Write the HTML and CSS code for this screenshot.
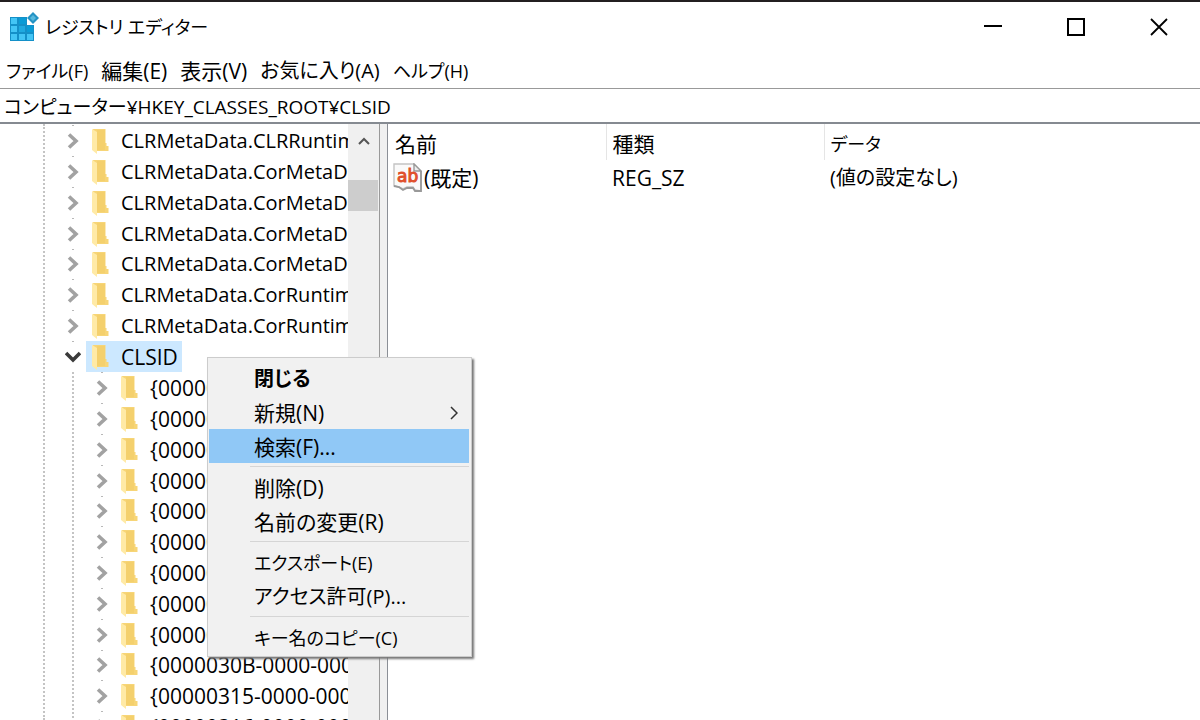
FILE: index.html
```html
<!DOCTYPE html>
<html lang="ja">
<head>
<meta charset="utf-8">
<title>レジストリ エディター</title>
<link rel="stylesheet" href="styles.css">
</head>
<body>
<svg class="defs" aria-hidden="true">
  <linearGradient id="sheet"><stop offset="0" stop-color="#f3cd68"/><stop offset="1" stop-color="#f9da82"/></linearGradient>
  <symbol id="folder" viewBox="0 0 18 26"><path d="M1 1h12.500v14l1 0v3l2 0v5H5z" fill="#f7d577"/><path d="M5 2h8v20H5z" fill="#f4d06d"/><path d="M0 1l5 3v22l-5-4z" fill="#ffeaa6"/></symbol>
  <symbol id="closed" viewBox="0 0 12 16"><path d="M2 1.500l7 6.500-7 6.500" fill="none" stroke="#a2a2a2" stroke-width="3.600"/></symbol>
  <symbol id="open" viewBox="0 0 16 12"><path d="M1 2l7 7 7-7" fill="none" stroke="#3a3a3a" stroke-width="3.600"/></symbol>
</svg>
<div class="window">
  <header class="titlebar">
    <svg class="app-icon" viewBox="0 0 29 30" aria-hidden="true">
      <path d="M0 5h17v8h7v16H0z" fill="#1490c8"/>
      <path d="M1 6h6v6H1zM1 14h6v6H1zM9 14h6v6H9zM1 22h6v6H1zM9 22h6v6H9zM17 22h6v6h-6z" fill="#43c5f5"/>
      <path d="M9 6h7v6H9zM17 14h6v6h-6z" fill="#0a9bd6"/><path d="M9 14h6v6H9z" fill="#1fa9e0"/>
      <path d="M23 0l6 6-6 6-6-6z" fill="#2593c4"/><path d="M23 3l3 3-3 3-3-3z" fill="#58b9dd"/>
    </svg>
    <h1 class="title">レジストリ エディター</h1>
    <div class="controls">
      <button class="control" aria-label="最小化"><svg viewBox="0 0 20 20"><path d="M1 9h18" stroke="#000" stroke-width="2"/></svg></button>
      <button class="control" aria-label="最大化"><svg viewBox="0 0 20 20"><path d="M2 2h16v16H2z" fill="none" stroke="#000" stroke-width="2"/></svg></button>
      <button class="control" aria-label="閉じる"><svg viewBox="0 0 20 20"><path d="M2 2l16 16M18 2L2 18" stroke="#000" stroke-width="1.800"/></svg></button>
    </div>
  </header>
  <nav class="menubar">
    <button class="kana">ファイル(F)</button><button>編集(E)</button><button>表示(V)</button><button class="mixed">お気に入り(A)</button><button class="kana">ヘルプ(H)</button>
  </nav>
  <input class="address" aria-label="アドレス" value="コンピューター¥HKEY_CLASSES_ROOT¥CLSID">
  <main class="panes">
    <section class="tree-pane">
      <ul class="tree">
        <li class="node"><svg class="arrow"><use href="#closed"/></svg><svg class="folder"><use href="#folder"/></svg><span>CLRMetaData.CLRRuntimeHost</span></li>
        <li class="node"><svg class="arrow"><use href="#closed"/></svg><svg class="folder"><use href="#folder"/></svg><span>CLRMetaData.CorMetaDataDispenser</span></li>
        <li class="node"><svg class="arrow"><use href="#closed"/></svg><svg class="folder"><use href="#folder"/></svg><span>CLRMetaData.CorMetaDataDispenser.2</span></li>
        <li class="node"><svg class="arrow"><use href="#closed"/></svg><svg class="folder"><use href="#folder"/></svg><span>CLRMetaData.CorMetaDataDispenserRuntime</span></li>
        <li class="node"><svg class="arrow"><use href="#closed"/></svg><svg class="folder"><use href="#folder"/></svg><span>CLRMetaData.CorMetaDataDispenserRuntime.2</span></li>
        <li class="node"><svg class="arrow"><use href="#closed"/></svg><svg class="folder"><use href="#folder"/></svg><span>CLRMetaData.CorRuntimeHost</span></li>
        <li class="node"><svg class="arrow"><use href="#closed"/></svg><svg class="folder"><use href="#folder"/></svg><span>CLRMetaData.CorRuntimeHost.2</span></li>
        <li class="node expanded"><svg class="arrow"><use href="#open"/></svg><div class="selected"><svg class="folder"><use href="#folder"/></svg><span>CLSID</span></div></li>
        <li>
          <ul class="children">
            <li class="node"><svg class="arrow"><use href="#closed"/></svg><svg class="folder"><use href="#folder"/></svg><span>{0000002F-0000-0000-C000-000000000046}</span></li>
            <li class="node"><svg class="arrow"><use href="#closed"/></svg><svg class="folder"><use href="#folder"/></svg><span>{00000300-0000-0000-C000-000000000046}</span></li>
            <li class="node"><svg class="arrow"><use href="#closed"/></svg><svg class="folder"><use href="#folder"/></svg><span>{00000301-A8F2-4877-BA0A-FD2B6645FB94}</span></li>
            <li class="node"><svg class="arrow"><use href="#closed"/></svg><svg class="folder"><use href="#folder"/></svg><span>{00000303-0000-0000-C000-000000000046}</span></li>
            <li class="node"><svg class="arrow"><use href="#closed"/></svg><svg class="folder"><use href="#folder"/></svg><span>{00000304-0000-0000-C000-000000000046}</span></li>
            <li class="node"><svg class="arrow"><use href="#closed"/></svg><svg class="folder"><use href="#folder"/></svg><span>{00000305-0000-0000-C000-000000000046}</span></li>
            <li class="node"><svg class="arrow"><use href="#closed"/></svg><svg class="folder"><use href="#folder"/></svg><span>{00000306-0000-0000-C000-000000000046}</span></li>
            <li class="node"><svg class="arrow"><use href="#closed"/></svg><svg class="folder"><use href="#folder"/></svg><span>{00000308-0000-0000-C000-000000000046}</span></li>
            <li class="node"><svg class="arrow"><use href="#closed"/></svg><svg class="folder"><use href="#folder"/></svg><span>{00000309-0000-0000-C000-000000000046}</span></li>
            <li class="node"><svg class="arrow"><use href="#closed"/></svg><svg class="folder"><use href="#folder"/></svg><span>{0000030B-0000-0000-C000-000000000046}</span></li>
            <li class="node"><svg class="arrow"><use href="#closed"/></svg><svg class="folder"><use href="#folder"/></svg><span>{00000315-0000-0000-C000-000000000046}</span></li>
            <li class="node"><svg class="arrow"><use href="#closed"/></svg><svg class="folder"><use href="#folder"/></svg><span>{00000316-0000-0000-C000-000000000046}</span></li>
          </ul>
        </li>
      </ul>
      <div class="scrollbar">
        <button class="scroll-up" aria-label="上へスクロール"><svg viewBox="0 0 12 8"><path d="M1 7l5-5 5 5" fill="none" stroke="#555" stroke-width="2"/></svg></button>
        <div class="thumb"></div>
      </div>
    </section>
    <div class="splitter"></div>
    <section class="values-pane">
      <table class="values">
        <colgroup><col class="col-name"><col class="col-type"><col></colgroup>
        <thead><tr><th>名前</th><th>種類</th><th class="kana">データ</th></tr></thead>
        <tbody><tr>
          <td class="name"><div class="value-name"><svg class="value-icon" viewBox="0 0 29 30" aria-hidden="true">
            <path d="M1 1h20l7 7v20l-6-1-2-3-6 0-4 2-4-2-5-1z" fill="#fafafa" stroke="#c4c4c4" stroke-width="1.400"/>
            <path d="M21 1v7h7z" fill="#eee" stroke="#999" stroke-width="1.400"/>
            <path d="M1 23l5 1 4 3 4-2 6 0 2 3 6 0V8" fill="none" stroke="#999" stroke-width="1.800"/>
            <text class="value-glyph" x="4" y="19">ab</text></svg><span>(既定)</span></div></td>
          <td>REG_SZ</td><td class="mixed">(値の設定なし)</td>
        </tr></tbody>
      </table>
    </section>
  </main>
  <div class="context-menu" role="menu">
    <button class="item default" role="menuitem">閉じる</button>
    <button class="item" role="menuitem">新規(N)<svg class="submenu" viewBox="0 0 8 14"><path d="M1 1l6 6-6 6" fill="none" stroke="#333" stroke-width="1.500"/></svg></button>
    <button class="item active" role="menuitem">検索(F)...</button>
    <hr>
    <button class="item" role="menuitem">削除(D)</button>
    <button class="item" role="menuitem">名前の変更(R)</button>
    <hr>
    <button class="item kana" role="menuitem">エクスポート(E)</button>
    <button class="item mixed" role="menuitem">アクセス許可(P)...</button>
    <hr>
    <button class="item kana" role="menuitem">キー名のコピー(C)</button>
  </div>
</div>
</body>
</html>
```
FILE: styles.css
```css
* { box-sizing: border-box; }
body { margin: 0; background: #fff; color: #000; }
body, button, input { font-family: "Open Sans", "Noto Sans CJK JP", sans-serif; font-size: 21px; line-height: 30px; font-feature-settings: "palt"; }
button { padding: 0; border: 0; background: none; color: inherit; }
ul { margin: 0; padding: 0; list-style: none; }
.mixed { font-size: 20px; }
.kana { font-size: 18px; }
.defs { position: absolute; width: 0; height: 0; }
.window { position: relative; display: flex; flex-direction: column; height: 100vh; overflow: hidden; border-top: 2px solid #231f20; }

.titlebar { display: flex; align-items: center; height: 50px; padding-left: 10px; }
.app-icon { width: 29px; height: 30px; }
.title { flex: 1; margin: 0 0 0 6px; font-size: 18px; font-weight: 400; }
.controls { display: flex; }
.control { display: flex; align-items: center; justify-content: center; width: 83px; height: 48px; }
.control svg { width: 20px; height: 20px; }

.menubar { display: flex; align-items: center; gap: 13px; height: 36px; padding: 2px 0 0 6px; }
.address { width: 100%; height: 36px; padding: 0 4px; border: 0; border-top: 1px solid #999; border-bottom: 2px solid #858a91; outline: 0; color: #000; background: #fff; font-size: 19px; }

.panes { display: flex; flex: 1; min-height: 0; }
.tree-pane { display: flex; width: 380px; border-right: 1px solid #999; overflow: hidden; }
.tree { flex: 1; min-width: 0; overflow: hidden; padding-top: 1px; margin-left: 43px; border-left: 2px dotted #c4c4c4; }
.node { display: flex; align-items: center; height: 31px; padding-left: 22px; white-space: nowrap; font-size: 20px; background: linear-gradient(#b8b8b8, #b8b8b8) 27px 0 / 2px 1px no-repeat; }
.node:nth-child(5n) { height: 30px; }
.arrow { flex: none; width: 12px; height: 16px; margin-right: 11px; }
.folder { flex: none; width: 18px; height: 26px; margin: 0 11px 0 2px; }
.expanded { padding-left: 20px; font-size: 21px; }
.expanded .arrow { width: 16px; height: 12px; margin-right: 5px; }
.selected { display: flex; align-items: center; height: 31px; padding: 0 4px; background: #cce8ff; }
.children { margin-left: 27px; border-left: 2px dotted #c4c4c4; }
.children .node { font-size: 21px; }
.scrollbar { display: flex; flex-direction: column; width: 31px; background: #f0f0f0; }
.scroll-up { display: flex; align-items: center; justify-content: center; height: 34px; margin-bottom: 22px; }
.scroll-up svg { width: 12px; height: 8px; }
.thumb { height: 31px; margin-right: 1px; background: #cdcdcd; }
.splitter { width: 8px; background: #f0f0f0; border-right: 1px solid #8b8f96; }

.values-pane { flex: 1; min-width: 0; }
.values { width: 100%; border-collapse: collapse; table-layout: fixed; }
.col-name { width: 218px; }
.col-type { width: 218px; }
th, td { padding: 0 0 0 6px; text-align: left; font-weight: 400; }
th { height: 36px; padding-top: 3px; border-right: 1px solid #e5e5e5; }
th:first-child { padding-left: 7px; }
th:last-child { border-right: 0; }
td { height: 36px; }
.name { padding-left: 5px; }
.value-name { display: flex; align-items: center; gap: 2px; }
.value-icon { width: 29px; height: 30px; }
.value-glyph { fill: #e0502c; stroke: #e0502c; stroke-width: 1px; font-family: "DejaVu Sans", sans-serif; font-size: 17px; }

.context-menu { position: absolute; top: 355px; left: 207px; display: flex; flex-direction: column; width: 265px; padding: 3px 2px 2px 1px; background: #f1f1f1; border: 1px solid #ccc; box-shadow: 2px 2px 2px #777; }
.item { display: flex; align-items: center; justify-content: space-between; height: 34px; padding: 2px 11px 0 45px; text-align: left; white-space: nowrap; }
.item.default { font-weight: 700; font-size: 20px; }
.item.active { background: #90c8f6; }
.submenu { width: 8px; height: 14px; }
.context-menu hr { width: auto; height: 1px; margin: 3px 0 3px 41px; border: 0; background: #d5d5d5; }
```
